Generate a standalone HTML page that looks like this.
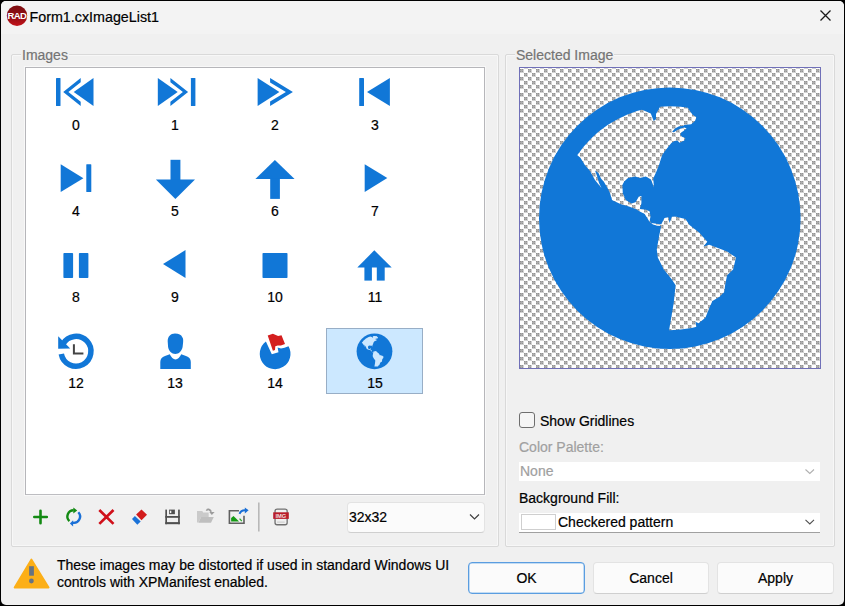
<!DOCTYPE html>
<html><head><meta charset="utf-8">
<style>
html,body{margin:0;padding:0;}
body{width:845px;height:606px;background:#000;position:relative;overflow:hidden;font-family:"Liberation Sans",sans-serif;font-size:14px;color:#000;-webkit-text-stroke:0.2px currentColor;}
.a{position:absolute;}
.t{position:absolute;line-height:16px;white-space:nowrap;}
#win{left:1px;top:1px;width:843px;height:604px;background:#f0f0f0;border-radius:5px;overflow:hidden;}
#titlebar{left:0;top:0;width:843px;height:33px;background:#f3f3f3;}
.grp{border:1px solid #d9d9d9;border-radius:2px;box-shadow:inset 0 0 0 1px #f7f7f7;}
.cap{background:#f0f0f0;color:#747474;padding:0 1px;}
.lbl{position:absolute;line-height:16px;width:60px;text-align:center;}
.btn{position:absolute;background:#fbfbfb;border:1px solid #e3e3e3;border-bottom-color:#cfcfcf;border-radius:4px;box-sizing:border-box;text-align:center;line-height:30px;}
</style></head>
<body>
<div id="win" class="a">
  <div id="titlebar" class="a"></div>
</div>

<!-- group boxes -->
<div class="a grp" style="left:11px;top:54px;width:486px;height:491px;"></div>
<div class="a grp" style="left:505px;top:54px;width:328px;height:491px;"></div>
<div class="t cap" style="left:21px;top:47px;">Images</div>
<div class="t cap" style="left:515px;top:47px;">Selected Image</div>

<!-- listbox -->
<div class="a" style="left:25px;top:67px;width:458px;height:426px;background:#fff;border:1px solid #b6b6ba;border-bottom-color:#bdbdc1;box-shadow:0 0 0 1px #f8f8f8;"></div>
<!-- selected item -->
<div class="a" style="left:326px;top:328px;width:95px;height:64px;background:#cce8ff;border:1px solid #98aec6;"></div>

<!-- preview -->
<div class="a" style="left:519px;top:67px;width:300px;height:300px;border:1px solid #7070b8;"></div>

<!-- labels -->
<div class="lbl" style="left:46px;top:117px;">0</div>
<div class="lbl" style="left:145px;top:117px;">1</div>
<div class="lbl" style="left:245px;top:117px;">2</div>
<div class="lbl" style="left:345px;top:117px;">3</div>
<div class="lbl" style="left:46px;top:203px;">4</div>
<div class="lbl" style="left:145px;top:203px;">5</div>
<div class="lbl" style="left:245px;top:203px;">6</div>
<div class="lbl" style="left:345px;top:203px;">7</div>
<div class="lbl" style="left:46px;top:289px;">8</div>
<div class="lbl" style="left:145px;top:289px;">9</div>
<div class="lbl" style="left:245px;top:289px;">10</div>
<div class="lbl" style="left:345px;top:289px;">11</div>
<div class="lbl" style="left:46px;top:375px;">12</div>
<div class="lbl" style="left:145px;top:375px;">13</div>
<div class="lbl" style="left:245px;top:375px;">14</div>
<div class="lbl" style="left:345px;top:375px;">15</div>

<!-- combo 32x32 -->
<div class="a" style="left:347px;top:502px;width:138px;height:31px;box-sizing:border-box;background:#fbfbfb;border:1px solid #e3e3e3;border-bottom-color:#cfcfcf;border-radius:4px;"></div>
<div class="t" style="left:349px;top:509px;">32x32</div>

<!-- right controls -->
<div class="a" style="left:519px;top:412px;width:16px;height:16px;box-sizing:border-box;border:1px solid #6e6e6e;border-radius:3px;background:#f5f5f5;"></div>
<div class="t" style="left:540px;top:413px;">Show Gridlines</div>
<div class="t" style="left:519px;top:439px;color:#a0a0a0;">Color Palette:</div>
<div class="a" style="left:519px;top:462px;width:301px;height:19px;background:#fff;"></div>
<div class="t" style="left:520px;top:463px;color:#a0a0a0;">None</div>
<div class="t" style="left:519px;top:490px;">Background Fill:</div>
<div class="a" style="left:519px;top:513px;width:301px;height:19px;background:#fff;border-bottom:1px solid #a0a0a0;"></div>
<div class="a" style="left:521px;top:514px;width:35px;height:16px;box-sizing:border-box;background:#fff;border:1px solid #cfcfcf;"></div>
<div class="t" style="left:558px;top:514px;">Checkered pattern</div>

<!-- warning text -->
<div class="t" style="left:57px;top:557px;">These images may be distorted if used in standard Windows UI</div>
<div class="t" style="left:57px;top:573.5px;">controls with XPManifest enabled.</div>

<!-- buttons -->
<div class="btn" style="left:468px;top:562px;width:117px;height:32px;border:1px solid #5a9de0;box-shadow:inset 0 0 0 0.5px #8cbdec;"></div>
<div class="btn" style="left:593px;top:562px;width:116px;height:32px;"></div>
<div class="btn" style="left:717px;top:562px;width:117px;height:32px;"></div>
<div class="t" style="left:468px;top:570px;width:117px;text-align:center;">OK</div>
<div class="t" style="left:593px;top:570px;width:116px;text-align:center;">Cancel</div>
<div class="t" style="left:717px;top:570px;width:117px;text-align:center;">Apply</div>

<!-- title -->
<div class="t" style="left:29.5px;top:8.5px;font-size:14.3px;">Form1.cxImageList1</div>

<svg class="a" style="left:0;top:0" width="845" height="606" viewBox="0 0 845 606">
<defs>
  <linearGradient id="radg" x1="0" y1="0" x2="0" y2="1"><stop offset="0" stop-color="#7d0d10"/><stop offset="0.55" stop-color="#8f0e13"/><stop offset="1" stop-color="#c4121a"/></linearGradient>
  <pattern id="chk" x="520" y="69" width="8" height="8" patternUnits="userSpaceOnUse">
    <rect width="8" height="8" fill="#fff"/>
    <g id="gc">
      <rect x="0" y="0" width="4" height="4" fill="#d2d2d2"/>
      <rect x="0" y="0" width="3" height="3" fill="#acacac"/>
      <rect x="0" y="0" width="1" height="1" fill="#929292"/>
      <rect x="2" y="0" width="1" height="1" fill="#929292"/>
      <rect x="0" y="2" width="1" height="1" fill="#929292"/>
      <rect x="2" y="2" width="1" height="1" fill="#929292"/>
    </g>
    <use href="#gc" x="4" y="4"/>
  </pattern>
  <clipPath id="inner"><circle cx="669.8" cy="218.2" r="112"/></clipPath>
  <mask id="gm" maskUnits="userSpaceOnUse" x="500" y="60" width="340" height="320">
    <circle cx="669.8" cy="218.2" r="130.8" fill="#fff"/>
    <g clip-path="url(#inner)" fill="#000">
      <path id="na" d="M575.9 154.1 L555 130 L600 85 L641 92 L641.5 109.4 L650.8 113.5 L653.7 121 L656 119.2 L656 114 L660.6 106 L662 92 L690 92 L687.7 107.7 L692.4 114.6 L696.4 117.3 L695 121 L691.2 124.2 L684.3 125.1 L683.1 126 L679.1 126.3 L675 128.6 L672.1 131.8 L673.9 132.3 L677.3 130 L680.8 128.6 L684.3 127.4 L686.6 128.6 L683.1 131.2 L681.4 132.3 L680.2 134.7 L682.5 137 L685.4 138.1 L684.3 140.4 L679.7 142.7 L677.3 140.4 L674.5 141 L671.6 142.7 L668.7 146.2 L665.8 150 L662.5 154.6 L661 158.5 L659.2 164.5 L656.2 171.9 L653.2 178.6 L654 187.5 L651 179.4 L645.8 176.4 L639.8 177.9 L635.4 176.4 L628 177.9 L624.2 181.6 L622.4 185 L622.8 193.3 L625.7 199.9 L631.5 203.6 L635.6 202.3 L638.9 196.6 L641.4 196.1 L641.4 203.2 L639.8 208.9 L646.4 209.8 L649.7 211.4 L650.5 216.4 L649.7 220.5 L651.3 223 L656.3 223.8 L662 224.6 L662 226 L657.1 225.8 L653 224.6 L649.7 222.1 L644.7 213.9 L639.8 211.4 L635.6 208.9 L629 206.5 L621.6 204.4 L615 201.5 L612 200 L610 193 L607.5 188 L604 182 L601 178.5 L598.5 173 L595 170.5 L597 176 L599 183 L601.5 188 L595 180 L590 171 L585 165.3 L580.4 157.8 Z"/>
      <path id="sa" d="M661.2 224.6 L664.5 218 L668.6 217.2 L669.5 223 L671.9 216.8 L675 216.4 L685.5 218.9 L689.5 224.9 L699.4 232.8 L707.3 241.7 L703.4 246.6 L709.3 244.7 L719.2 248.6 L727.1 251.6 L736 257.5 L733.1 269.4 L727.1 275.3 L725.1 285.2 L724.3 292 L719.3 296.9 L712.4 300.9 L709.4 307.8 L705.4 317.7 L698.5 323.2 L695.5 321.7 L696.5 327.1 L700 340 L668 342 L669.3 329.1 L673.7 303.1 L675.6 285.2 L671.7 279.3 L663.8 269.4 L657.8 257.5 L656.8 249.6 L658.8 237.7 L660.8 227.8 Z"/>
    </g>
  </mask>
</defs>

<!-- preview checker -->
<rect x="520" y="68" width="300" height="300" fill="url(#chk)"/>
<!-- big globe -->
<rect x="530" y="80" width="280" height="280" fill="#1177d7" mask="url(#gm)"/>

<g fill="#1177d7">
  <!-- 0 -->
  <rect x="56" y="78" width="4.5" height="28" rx="0.6"/>
  <polygon points="63.2,92 80.7,78 80.7,82.2 68.4,92 80.7,101.8 80.7,106"/>
  <polygon points="73.7,92 93.5,78 93.5,106"/>
  <!-- 1 -->
  <polygon points="157.8,78 177.7,92 157.8,106"/>
  <polygon points="170.4,78 188.1,92 170.4,106 170.4,101.8 182.9,92 170.4,82.2"/>
  <rect x="190.9" y="78" width="4.5" height="28" rx="0.6"/>
  <!-- 2 -->
  <polygon points="257.6,78 279.4,92 257.6,106"/>
  <polygon points="270.1,78 292.9,92 270.1,106 270.1,101.5 285.9,92 270.1,82.5"/>
  <!-- 3 -->
  <rect x="359.2" y="78" width="4.8" height="28" rx="0.6"/>
  <polygon points="367,92 389.9,78 389.9,106"/>
  <!-- 4 -->
  <polygon points="60.7,164.2 83.4,178.2 60.7,192.1"/>
  <rect x="86.3" y="164.2" width="5" height="27.9" rx="0.6"/>
  <!-- 5 -->
  <rect x="170.5" y="159.8" width="9.9" height="20.5"/>
  <polygon points="155.9,179.6 195,179.6 175.4,199.1"/>
  <!-- 6 -->
  <polygon points="255.4,179.1 294.6,179.1 274.9,159.95"/>
  <rect x="270.2" y="178.6" width="9.7" height="20.3"/>
  <!-- 7 -->
  <polygon points="364.7,164.2 387.3,178.1 364.7,192"/>
  <!-- 8 -->
  <rect x="63.4" y="253" width="9.7" height="25" rx="0.8"/>
  <rect x="78.9" y="253" width="9.5" height="25" rx="0.8"/>
  <!-- 9 -->
  <polygon points="163,264.1 185.5,250.1 185.5,278"/>
  <!-- 10 -->
  <rect x="262.5" y="253" width="25" height="25" rx="0.8"/>
  <!-- 11 -->
  <polygon points="357.3,267.6 374.3,250.3 391.7,267.6"/>
  <rect x="364.4" y="267" width="7.5" height="13.6"/>
  <rect x="376.8" y="267" width="7.9" height="13.6"/>
  <!-- 12 -->
  <path d="M61.3 354 A14.95 14.95 0 1 0 63.05 343.8" fill="none" stroke="#1177d7" stroke-width="5.5"/>
  <polygon points="58.2,336.3 58.2,348.7 70.2,348.4"/>
  <path d="M73.9 344.2 V353.4 H83.4" fill="none" stroke="#444" stroke-width="2"/>
  <!-- 13 -->
  <path d="M175 333.6 C178.8 333.6 181.3 335 182.3 337.2 C183.3 338.3 183.3 340.5 183.1 342.5 L182.6 347 C181.8 351.2 178.8 354 175.4 354 C171.6 354 168.8 351 168.1 347 L167.7 341.5 C167.6 336.8 170.5 333.6 175 333.6 Z"/>
  <path d="M160.3 369.1 V362 Q160.3 357.5 165 356 L169.8 354.3 Q172 359.2 175.5 359.6 Q179 359.2 181.2 354.3 L186 356 Q190.8 357.5 190.8 362 V369.1 Z"/>
  <!-- 14 -->
  <path d="M265.9 341.5 L271.8 354.2 L278.5 352.3 L277.6 347.6 L281 348.4 L284.5 347.8 L288.5 346.3 A15.35 15.35 0 1 1 265.9 341.5 Z"/>
  <polygon fill="#d41f1f" points="267.7,335.5 272.9,333.8 278.1,335.9 281.5,335.2 285,343.9 280.9,345.6 277.7,345.6 275.3,346.3 275,350.1 272.9,350.8"/>
</g>
<!-- 15 small globe -->
<g transform="translate(374.5 351.3) scale(0.1368) translate(-669.8 -218.2)">
  <rect x="530" y="80" width="280" height="280" fill="#1177d7" mask="url(#gm)"/>
</g>

<!-- toolbar -->
<path d="M34.3 517 H46.8 M40.5 510.8 V523.2" stroke="#138a13" stroke-width="2.6" stroke-linecap="round" fill="none"/>
<path d="M69.4 521.11 A6.3 6.3 0 0 1 73.6 510.2" stroke="#138a13" stroke-width="2.4" fill="none"/>
<polygon points="73.3,507.4 77.2,510.4 73.3,513.6" fill="#138a13"/>
<path d="M78.31 512.2 A6.3 6.3 0 0 1 72.8 522.75" stroke="#1a6fd6" stroke-width="2.4" fill="none"/>
<polygon points="73.1,520.2 69.9,523.4 73.1,526.5" fill="#1a6fd6"/>
<path d="M99.3 510 L113.5 523.9 M113.5 510 L99.3 523.9" stroke="#d0101a" stroke-width="2.7" fill="none"/>
<polygon points="141.5,509.4 147,514.7 141.5,520.2 136.1,514.5" fill="#d21c1c"/>
<polygon points="134.9,515.9 140.7,521.4 137.3,524.8 132,519.1" fill="#1a72d8"/>
<g fill="#505050">
  <rect x="165.3" y="509.6" width="1.7" height="14.6"/>
  <rect x="178.1" y="509.6" width="1.7" height="14.6"/>
  <rect x="165.3" y="516" width="14.5" height="1.8"/>
  <rect x="165.3" y="522.1" width="14.5" height="2.1"/>
  <rect x="169.1" y="509.6" width="5.8" height="4.6"/>
</g>
<rect x="169.9" y="510.7" width="1.4" height="2.4" fill="#f4f4f4"/>
<path d="M197 522.6 V511.1 H202.3 L203.1 512.5 H208.7 V517.1 H201.1 L198.4 522.6 Z" fill="#cacaca"/>
<path d="M201.1 517.1 H213.8 L211 522.8 H198.4 Z" fill="#bfbfbf"/>
<path d="M206.3 510.6 Q208.5 507.6 211.3 511.8" stroke="#9c9c9c" stroke-width="1.6" fill="none"/>
<polygon points="209.3,512 214.6,512 211.8,514.9" fill="#9c9c9c"/>
<path d="M239 510.7 H229.4 V523.2 H244 V515.7" stroke="#606060" stroke-width="1.6" fill="none"/>
<polygon points="231.1,518 233.5,515.9 239.1,521.6 231.1,521.6" fill="#159a15"/>
<path d="M239.6 518.6 L241.8 521.2" stroke="#2aa52a" stroke-width="1.2"/>
<path d="M239.5 513.9 Q241 510.1 245.2 510.3" stroke="#1a6fd6" stroke-width="1.9" fill="none"/>
<polygon points="244.8,507.4 248.6,510.3 244.8,513.5" fill="#1a6fd6"/>
<rect x="258.2" y="502.5" width="1.3" height="29" fill="#ababab"/>
<rect x="275.05" y="509.05" width="12.1" height="15.7" rx="2" fill="none" stroke="#707070" stroke-width="1.3"/>
<rect x="277.1" y="521.6" width="7.6" height="1" fill="#c8c8c8"/>
<rect x="273.2" y="512.3" width="15.6" height="6.6" fill="#b81d2a"/>
<text x="280.9" y="517.8" font-family="Liberation Sans" font-size="5.8" font-weight="bold" fill="#f0dcdc" text-anchor="middle">IMG</text>
<!-- warning -->
<path d="M31.4 559.4 L48.6 587.5 L14.6 587.5 Z" fill="#fcaf17" stroke="#fcaf17" stroke-width="1.8" stroke-linejoin="round"/>
<rect x="29.1" y="566.2" width="4.8" height="9.5" fill="#667383"/>
<circle cx="31.4" cy="581" r="2.4" fill="#667383"/>
<!-- title icon -->
<circle cx="17" cy="15.7" r="10.2" fill="url(#radg)"/>
<text x="16.9" y="18.7" font-family="Liberation Sans" font-size="9.5" font-weight="bold" fill="#fff" text-anchor="middle" letter-spacing="-0.6">RAD</text>
<!-- close X -->
<path d="M820.5 10.5 L830.5 20.5 M830.5 10.5 L820.5 20.5" stroke="#1a1a1a" stroke-width="1.3"/>
<!-- chevrons -->
<path d="M470 514.5 L474.5 519 L479 514.5" fill="none" stroke="#404040" stroke-width="1.2"/>
<path d="M805.5 469.5 L809.8 473.5 L814 469.5" fill="none" stroke="#b0b0b0" stroke-width="1.1"/>
<path d="M805.5 519.8 L809.8 524 L814 519.8" fill="none" stroke="#505050" stroke-width="1.1"/>
</svg>
</body></html>
